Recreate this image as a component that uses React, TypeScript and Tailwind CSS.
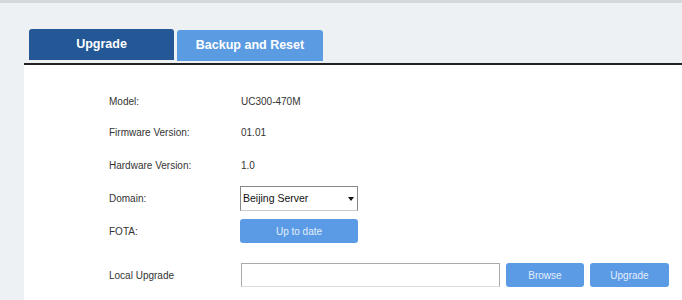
import React from 'react';

const rows = [
  { label: 'Model:', value: 'UC300-470M', mt: 'mt-0' },
  { label: 'Firmware Version:', value: '01.01', mt: 'mt-[7px]' },
  { label: 'Hardware Version:', value: '1.0', mt: 'mt-[9px]' },
];

const App: React.FC = () => {
  return (
    <div
      className="w-full h-[300px] bg-[#edf1f4] border-t-[3px] border-[#d3d8dd] overflow-hidden"
      style={{ fontFamily: '"Liberation Sans", Arial, sans-serif' }}
    >
      <div className="pl-[24px] pt-[26px]">
        {/* tabs */}
        <div className="flex items-end pl-[5px] gap-[3px] h-[34px]">
          <div className="w-[145px] h-[31px] mb-[3px] rounded-t-[3px] bg-[#245795] text-white text-[12.5px] font-bold flex items-center justify-center">
            Upgrade
          </div>
          <div className="w-[146px] h-[31px] mb-[2px] rounded-t-[3px] bg-[#5b9be2] text-white text-[12.5px] font-bold flex items-center justify-center">
            Backup and Reset
          </div>
        </div>
        <div className="h-[2px] bg-[#222]" />

        {/* panel */}
        <div className="bg-white h-[240px] pt-[24px] pl-[85px] text-[10px] text-[#333]">
          {rows.map((r) => (
            <div key={r.label} className={`flex items-center h-[24px] ${r.mt}`}>
              <div className="w-[132px]">{r.label}</div>
              <div>{r.value}</div>
            </div>
          ))}
          <div className="flex items-center h-[25px] mt-[9px]">
            <div className="w-[131px]">Domain:</div>
            <div className="w-[118px] h-[25px] border border-[#888] border-b-[#ccc] flex items-center justify-between px-[2px] text-[10.5px] text-[#111]">
              <span>Beijing Server</span>
              <span className="w-0 h-0 border-l-[3px] border-r-[3px] border-t-[4px] border-l-transparent border-r-transparent border-t-[#111] mr-[1px]" />
            </div>
          </div>
          <div className="flex items-center h-[24px] mt-[8px]">
            <div className="w-[131px]">FOTA:</div>
            <div className="w-[118px] h-[24px] rounded-[3px] bg-[#5b9be6] text-[#e3eefb] flex items-center justify-center">
              Up to date
            </div>
          </div>
          <div className="flex items-center h-[24px] mt-[20px]">
            <div className="w-[132px]">Local Upgrade</div>
            <div className="w-[259px] h-[24px] border border-[#aaa] border-b-[#ddd]" />
            <div className="w-[78px] h-[24px] ml-[6px] rounded-[3px] bg-[#5b9be6] text-[#e3eefb] flex items-center justify-center">
              Browse
            </div>
            <div className="w-[79px] h-[24px] ml-[6px] rounded-[3px] bg-[#5b9be6] text-[#e3eefb] flex items-center justify-center">
              Upgrade
            </div>
          </div>
        </div>
      </div>
    </div>
  );
};

export default App;
